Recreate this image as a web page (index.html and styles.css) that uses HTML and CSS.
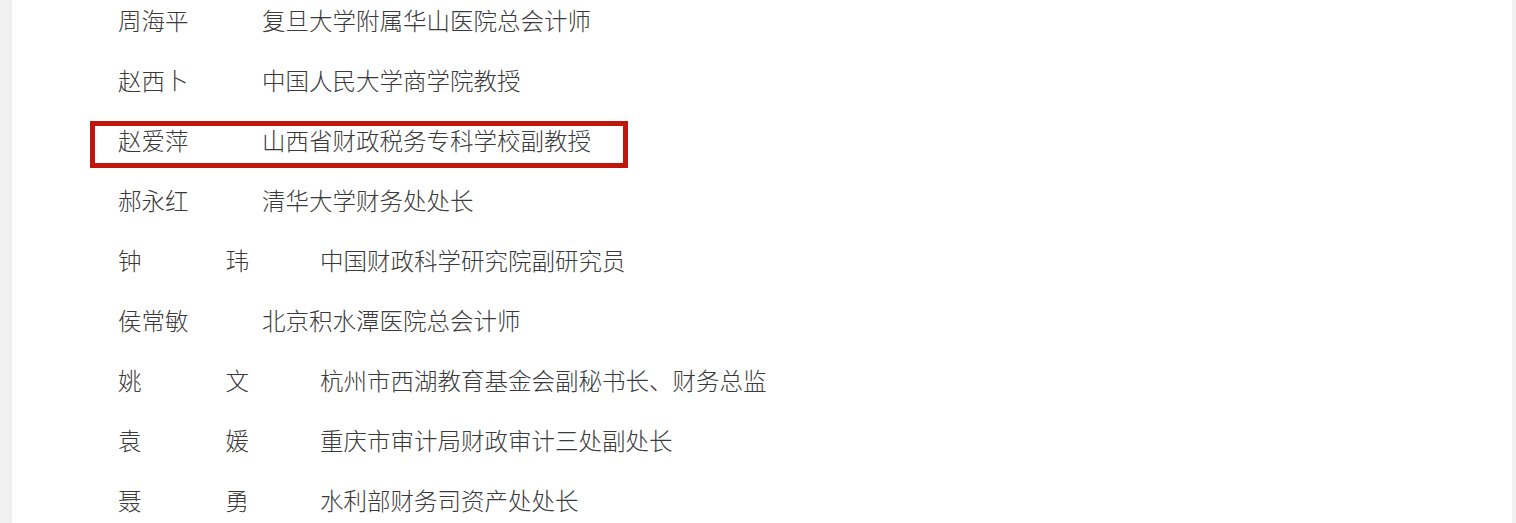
FILE: index.html
```html
<!DOCTYPE html>
<html lang="zh-CN">
<head>
    <meta charset="UTF-8">
    <meta name="viewport" content="width=device-width, initial-scale=1.0">
    <title>专家名单</title>
    <link rel="stylesheet" href="styles.css">
</head>
<body>
    <div class="page">
        <ul class="list">
            <li class="row"><span class="name">周海平</span><span class="title">复旦大学附属华山医院总会计师</span></li>
            <li class="row"><span class="name">赵西卜</span><span class="title">中国人民大学商学院教授</span></li>
            <li class="row marked"><span class="name">赵爱萍</span><span class="title">山西省财政税务专科学校副教授</span></li>
            <li class="row"><span class="name">郝永红</span><span class="title">清华大学财务处处长</span></li>
            <li class="row"><span class="name wide">钟玮</span><span class="title">中国财政科学研究院副研究员</span></li>
            <li class="row"><span class="name">侯常敏</span><span class="title">北京积水潭医院总会计师</span></li>
            <li class="row"><span class="name wide">姚文</span><span class="title">杭州市西湖教育基金会副秘书长、财务总监</span></li>
            <li class="row"><span class="name wide">袁媛</span><span class="title">重庆市审计局财政审计三处副处长</span></li>
            <li class="row"><span class="name wide">聂勇</span><span class="title">水利部财务司资产处处长</span></li>
        </ul>
    </div>
</body>
</html>
```

FILE: styles.css
```css
body {
    margin: 0;
    background-color: #f0f0f0;
    font-family: "Noto Sans CJK SC", "Noto Sans", sans-serif;
    color: #3a3a3a;
    height: 100vh;
    overflow: hidden;
}
.page {
    background: #ffffff;
    margin: 0 4px 0 12px;
    min-height: 100%;
    padding-top: 1px;
}
.list {
    list-style: none;
    margin: 0 0 0 78px;
    padding: 0;
}
.row {
    display: flex;
    width: fit-content;
    border: 5px solid transparent;
    padding: 0 32px 9px 23px;
    margin-bottom: 13px;
    font-size: 23.5px;
    font-weight: 300;
    line-height: 28px;
    white-space: nowrap;
}
.row.marked {
    border-color: #bf170d;
}
.name {
    width: 144px;
    flex-shrink: 0;
}
.name.wide {
    width: 202px;
    letter-spacing: 84px;
}
```
